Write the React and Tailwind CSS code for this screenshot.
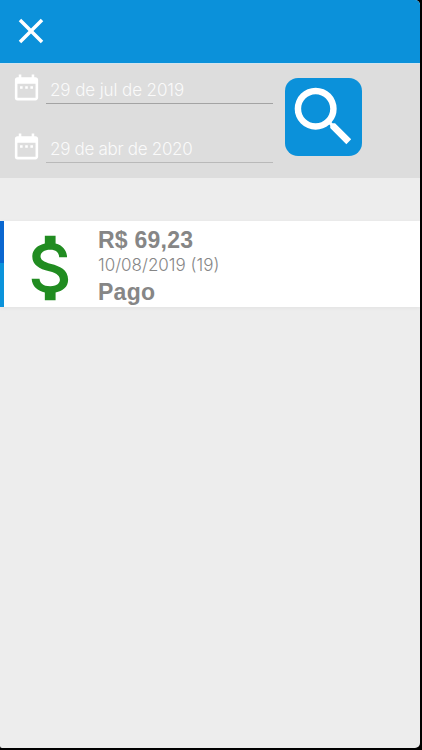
import { MdAttachMoney, MdClose, MdDateRange, MdSearch } from "react-icons/md";

const PERIOD = [
    { id: "start", value: "29 de jul de 2019", cls: "border-[#a3a3a3] tracking-[-0.1px]" },
    { id: "end", value: "29 de abr de 2020", cls: "border-[#b9b9b9] tracking-[-0.3px]" },
];

const PAYMENTS = [{ id: 1, amount: "R$ 69,23", date: "10/08/2019 (19)", status: "Pago" }];

function DateField({ value, cls }) {
    return (
        <div className="flex h-[59px] items-start">
            <MdDateRange className="mt-[7.5px] size-[31px] shrink-0 text-white" />
            <div
                className={`ml-1 h-10 w-[227px] border-b pl-1 pt-[14px] font-['Inter'] text-[17px] leading-6 font-light whitespace-nowrap text-[#fafafa] ${cls}`}
            >
                {value}
            </div>
        </div>
    );
}

function PaymentCard({ amount, date, status }) {
    return (
        <div className="flex h-[86px] bg-white shadow-[0_1px_4px_rgba(0,0,0,0.05)]">
            <div className="flex w-1 flex-col">
                <div className="h-[42px] bg-[#0a67d0]" />
                <div className="flex-1 bg-[#0b93db]" />
            </div>
            <MdAttachMoney className="ml-[5px] mt-1 size-[86px] shrink-0 text-[#218c21]" />
            <div className="ml-[3px] text-[#868686]">
                <p className="mt-[5px] h-7 text-[23px] leading-7 font-bold tracking-[0.25px]">{amount}</p>
                <p className="mt-px h-5 font-['Inter'] text-[17px] leading-5 font-light">{date}</p>
                <p className="mt-[3px] h-7 text-[23px] leading-7 font-bold tracking-[0.25px]">{status}</p>
            </div>
        </div>
    );
}

export default function App() {
    return (
        <div className="h-[750px] w-[422px] bg-black font-['Liberation_Sans',sans-serif]">
            <div className="h-[748px] w-[420px] overflow-hidden rounded-r-[5px] rounded-bl-[2px] bg-[#ededed]">
                <header className="flex h-[63px] items-start bg-[#0b91da] pt-[10px] pl-[10px]">
                    <MdClose className="size-[42px] text-white" />
                </header>

                <section className="flex h-[115px] border-t border-[#d3e4ee] bg-[#dddddd] pl-[11px]">
                    <div>
                        {PERIOD.map((field) => (
                            <DateField key={field.id} {...field} />
                        ))}
                    </div>
                    <button className="ml-[11.5px] mt-[14px] size-[77.5px] rounded-[13px] bg-[#0b91da]">
                        <MdSearch className="size-[77.5px] text-white" />
                    </button>
                </section>

                <main className="pt-[43px]">
                    {PAYMENTS.map((payment) => (
                        <PaymentCard key={payment.id} {...payment} />
                    ))}
                </main>
            </div>
        </div>
    );
}
